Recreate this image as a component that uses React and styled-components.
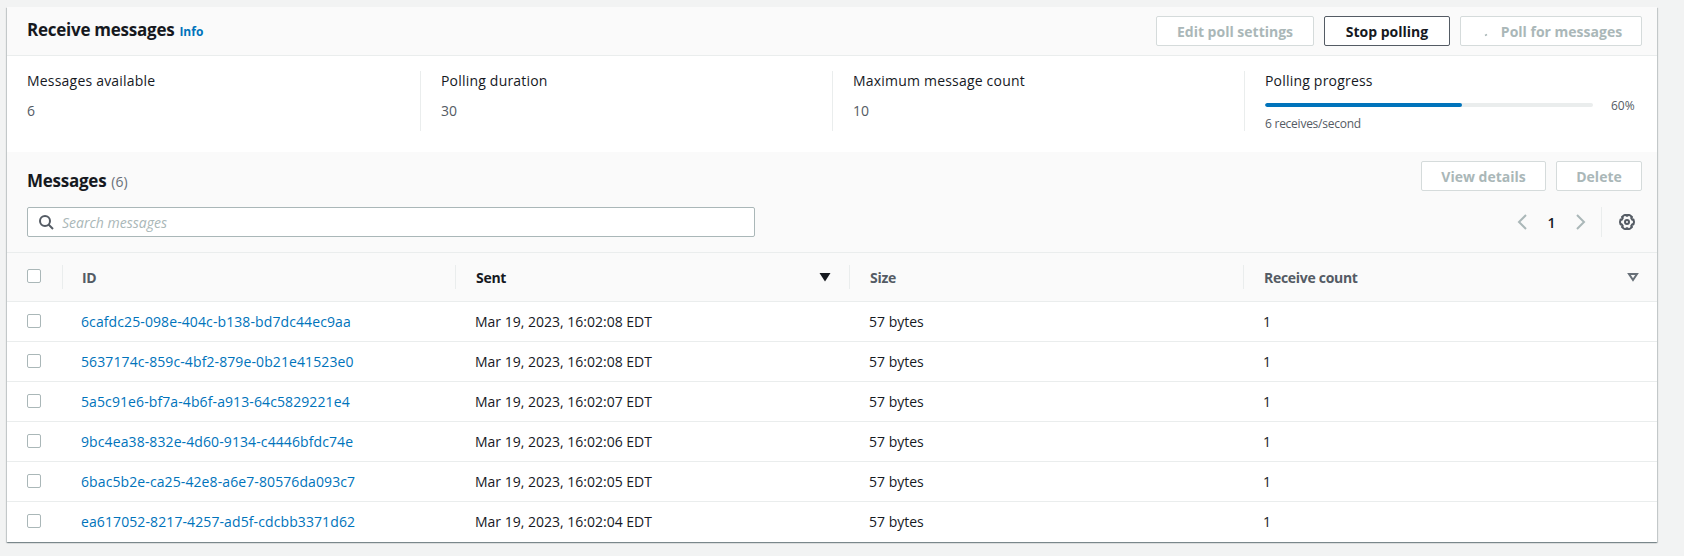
import React from "react";
import styled, { createGlobalStyle } from "styled-components";

const GlobalStyle = createGlobalStyle`
  body {
    margin: 0;
    background: #f2f3f3;
    color: #16191f;
    font-family: "Open Sans", "Noto Sans", sans-serif;
    font-size: 14px;
  }
`;

const Card = styled.div`
  margin: 7px 27px 15px 7px;
  background: #fff;
  box-shadow: 0 1px 1px 0 rgba(0, 28, 36, 0.3), 1px 1px 1px 0 rgba(0, 28, 36, 0.15),
    -1px 1px 1px 0 rgba(0, 28, 36, 0.15);
`;

const Header = styled.div`
  display: flex;
  align-items: center;
  justify-content: space-between;
  height: 48px;
  padding: 0 15px 0 20px;
  background: #fafafa;
  border-bottom: 1px solid #eaeded;
`;

const Title = styled.h2`
  margin: ${(p) => (p.$low ? "10px 0 0" : "0")};
  font-size: 17px;
  font-weight: 700;
  line-height: 22px;
  letter-spacing: -0.25px;
`;

const InfoLink = styled.a`
  margin-left: 5px;
  font-size: 12px;
  font-weight: 700;
  letter-spacing: 0;
  color: #0073bb;
`;

const Count = styled.span`
  margin-left: 5px;
  font-size: 14px;
  font-weight: 400;
  letter-spacing: 0;
  color: #687078;
`;

const Actions = styled.div`
  display: flex;
  gap: 10px;
`;

const Button = styled.button`
  display: flex;
  align-items: center;
  justify-content: center;
  box-sizing: border-box;
  height: 30px;
  width: ${(p) => p.$width}px;
  padding: 0;
  background: #fff;
  border: 1px solid ${(p) => (p.disabled ? "#d5dbdb" : "#545b64")};
  border-radius: 2px;
  color: ${(p) => (p.disabled ? "#aab7b8" : "#16191f")};
  font-family: inherit;
  font-size: 14px;
  font-weight: 700;
`;

const Spinner = styled.svg`
  width: 16px;
  height: 16px;
  margin-right: 6px;
  margin-left: -1px;
`;

const Stats = styled.div`
  display: grid;
  grid-template-columns: 393px 412px 412px 1fr;
  height: 96px;
  padding: 15px 0 0 20px;
  box-sizing: border-box;
`;

const Stat = styled.div`
  height: 60px;
  padding-left: ${(p) => (p.$first ? 0 : 20)}px;
  border-left: ${(p) => (p.$first ? "none" : "1px solid #eaeded")};
`;

const StatLabel = styled.div`
  font-size: 14px;
  line-height: 20px;
  letter-spacing: 0.2px;
`;

const StatValue = styled.div`
  margin-top: 10px;
  line-height: 20px;
  color: #545b64;
`;

const ProgressRow = styled.div`
  display: flex;
  align-items: center;
  gap: 18px;
  margin-top: 4px;
  height: 20px;
  font-size: 12px;
  color: #545b64;
`;

const Track = styled.div`
  width: 328px;
  height: 4px;
  border-radius: 2px;
  background: #eaeded;
  overflow: hidden;
`;

const Fill = styled.div`
  height: 100%;
  background: #0073bb;
  border-radius: 2px;
`;

const ProgressNote = styled.div`
  margin-top: 1px;
  font-size: 12px;
  line-height: 16px;
  letter-spacing: -0.25px;
  color: #545b64;
`;

const Section = styled.div`
  background: #fafafa;
  padding: 9px 15px 15px 20px;
  border-bottom: 1px solid #eaeded;
`;

const SectionTop = styled.div`
  display: flex;
  align-items: center;
  justify-content: space-between;
  height: 30px;
`;

const Toolbar = styled.div`
  display: flex;
  align-items: center;
  justify-content: space-between;
  height: 30px;
  margin-top: 16px;
`;

const SearchBox = styled.label`
  display: flex;
  align-items: center;
  box-sizing: border-box;
  width: 728px;
  height: 30px;
  padding-left: 10px;
  background: #fff;
  border: 1px solid #aab7b8;
  border-radius: 2px;
`;

const SearchInput = styled.input`
  flex: 1;
  margin-left: 8px;
  border: 0;
  outline: 0;
  padding: 0;
  background: transparent;
  font-family: inherit;
  font-size: 14px;
  &::placeholder {
    color: #aab7b8;
    font-style: italic;
    opacity: 1;
  }
`;

const Pager = styled.div`
  display: flex;
  align-items: center;
  height: 30px;
`;

const PageNumber = styled.span`
  width: 41px;
  text-align: center;
  font-weight: 600;
  font-size: 14px;
`;

const PrefButton = styled.div`
  display: flex;
  align-items: center;
  height: 30px;
  margin-left: 13px;
  padding-left: 17px;
  padding-right: 7px;
  border-left: 1px solid #eaeded;
`;

const Row = styled.div`
  display: grid;
  grid-template-columns: 56px 393px 394px 394px 1fr;
  align-items: center;
  box-sizing: border-box;
  height: ${(p) => (p.$head ? 49 : 40)}px;
  background: ${(p) => (p.$head ? "#fafafa" : "#fff")};
  border-bottom: ${(p) => (p.$last ? "none" : "1px solid #eaeded")};
`;

const HeadCell = styled.div`
  display: flex;
  align-items: center;
  justify-content: space-between;
  height: 24px;
  padding: 0 ${(p) => p.$right || 18}px 0 ${(p) => p.$left || 20}px;
  border-left: 1px solid #eaeded;
  margin-left: -1px;
  font-weight: 700;
  letter-spacing: -0.3px;
  color: ${(p) => (p.$active ? "#16191f" : "#545b64")};
`;

const Cell = styled.div`
  padding-left: ${(p) => p.$left || 19}px;
  line-height: 20px;
`;

const CheckCell = styled.div`
  display: flex;
  padding-left: 20px;
  margin-top: -2px;
`;

const Checkbox = styled.span`
  display: block;
  box-sizing: border-box;
  width: 14px;
  height: 14px;
  background: #fff;
  border: 1px solid #aab7b8;
  border-radius: 2px;
`;

const IdLink = styled.a`
  color: #0073bb;
  letter-spacing: 0.1px;
`;

const ChevronLeft = () => (
  <svg width="16" height="16" viewBox="0 0 16 16" fill="none" stroke="#aab7b8" strokeWidth="2">
    <path d="M11 1L4 8l7 7" />
  </svg>
);

const ChevronRight = () => (
  <svg width="16" height="16" viewBox="0 0 16 16" fill="none" stroke="#aab7b8" strokeWidth="2">
    <path d="M5 1l7 7-7 7" />
  </svg>
);

const SearchIcon = () => (
  <svg width="16" height="16" viewBox="0 0 16 16" fill="none" stroke="#545b64" strokeWidth="2">
    <circle cx="7" cy="7" r="5" />
    <path d="M15 15l-4.5-4.5" />
  </svg>
);

const GearIcon = () => (
  <svg width="16" height="16" viewBox="0 0 16 16" fill="none" stroke="#545b64" strokeWidth="2" strokeLinejoin="round">
    <path d="M13.3 5.8l1.2-.2.5 2.4-.5 2.4-1.2-.2-1.1 1.9.8.9-1.8 1.6-2.2.8-.4-1.1H7.4l-.4 1.1-2.2-.8L3 13l.8-.9-1.1-1.9-1.2.2L1 8l.5-2.4 1.2.2 1.1-1.9L3 3l1.8-1.6L7 .6l.4 1.1h1.2L9 .6l2.2.8L13 3l-.8.9z" />
    <circle cx="8" cy="8" r="2" />
  </svg>
);

const SortDown = ({ filled }) => (
  <svg width="12" height="10" viewBox="0 0 12 10">
    {filled ? (
      <path d="M0.5 1h11L6 9.5z" fill="#16191f" />
    ) : (
      <path d="M2 2h8L6 8z" fill="none" stroke="#687078" strokeWidth="2" strokeLinejoin="miter" />
    )}
  </svg>
);

const messages = [
  ["6cafdc25-098e-404c-b138-bd7dc44ec9aa", "Mar 19, 2023, 16:02:08 EDT"],
  ["5637174c-859c-4bf2-879e-0b21e41523e0", "Mar 19, 2023, 16:02:08 EDT"],
  ["5a5c91e6-bf7a-4b6f-a913-64c5829221e4", "Mar 19, 2023, 16:02:07 EDT"],
  ["9bc4ea38-832e-4d60-9134-c4446bfdc74e", "Mar 19, 2023, 16:02:06 EDT"],
  ["6bac5b2e-ca25-42e8-a6e7-80576da093c7", "Mar 19, 2023, 16:02:05 EDT"],
  ["ea617052-8217-4257-ad5f-cdcbb3371d62", "Mar 19, 2023, 16:02:04 EDT"],
];

export default function App() {
  return (
    <>
      <GlobalStyle />
      <Card>
        <Header>
          <Title>
            Receive messages<InfoLink>Info</InfoLink>
          </Title>
          <Actions>
            <Button disabled $width={158}>Edit poll settings</Button>
            <Button $width={126}>Stop polling</Button>
            <Button disabled $width={182}>
              <Spinner viewBox="0 0 16 16" fill="none" stroke="#aab7b8" strokeWidth="1.5">
                <path d="M6 12.5l2 -1" />
              </Spinner>
              Poll for messages
            </Button>
          </Actions>
        </Header>

        <Stats>
          <Stat $first>
            <StatLabel>Messages available</StatLabel>
            <StatValue>6</StatValue>
          </Stat>
          <Stat>
            <StatLabel>Polling duration</StatLabel>
            <StatValue>30</StatValue>
          </Stat>
          <Stat>
            <StatLabel>Maximum message count</StatLabel>
            <StatValue>10</StatValue>
          </Stat>
          <Stat>
            <StatLabel>Polling progress</StatLabel>
            <ProgressRow>
              <Track>
                <Fill style={{ width: "60%" }} />
              </Track>
              60%
            </ProgressRow>
            <ProgressNote>6 receives/second</ProgressNote>
          </Stat>
        </Stats>

        <Section>
          <SectionTop>
            <Title $low>
              Messages<Count>(6)</Count>
            </Title>
            <Actions>
              <Button disabled $width={125}>View details</Button>
              <Button disabled $width={86}>Delete</Button>
            </Actions>
          </SectionTop>
          <Toolbar>
            <SearchBox>
              <SearchIcon />
              <SearchInput placeholder="Search messages" readOnly />
            </SearchBox>
            <Pager>
              <ChevronLeft />
              <PageNumber>1</PageNumber>
              <ChevronRight />
              <PrefButton>
                <GearIcon />
              </PrefButton>
            </Pager>
          </Toolbar>
        </Section>

        <Row $head>
          <CheckCell>
            <Checkbox />
          </CheckCell>
          <HeadCell $left={19}>ID</HeadCell>
          <HeadCell $active $right={19}>
            Sent
            <SortDown filled />
          </HeadCell>
          <HeadCell>Size</HeadCell>
          <HeadCell>
            Receive count
            <SortDown />
          </HeadCell>
        </Row>
        {messages.map(([id, sent], i) => (
          <Row key={id} $last={i === messages.length - 1}>
            <CheckCell>
              <Checkbox />
            </CheckCell>
            <Cell $left={18}>
              <IdLink>{id}</IdLink>
            </Cell>
            <Cell>{sent}</Cell>
            <Cell>57 bytes</Cell>
            <Cell>1</Cell>
          </Row>
        ))}
      </Card>
    </>
  );
}
